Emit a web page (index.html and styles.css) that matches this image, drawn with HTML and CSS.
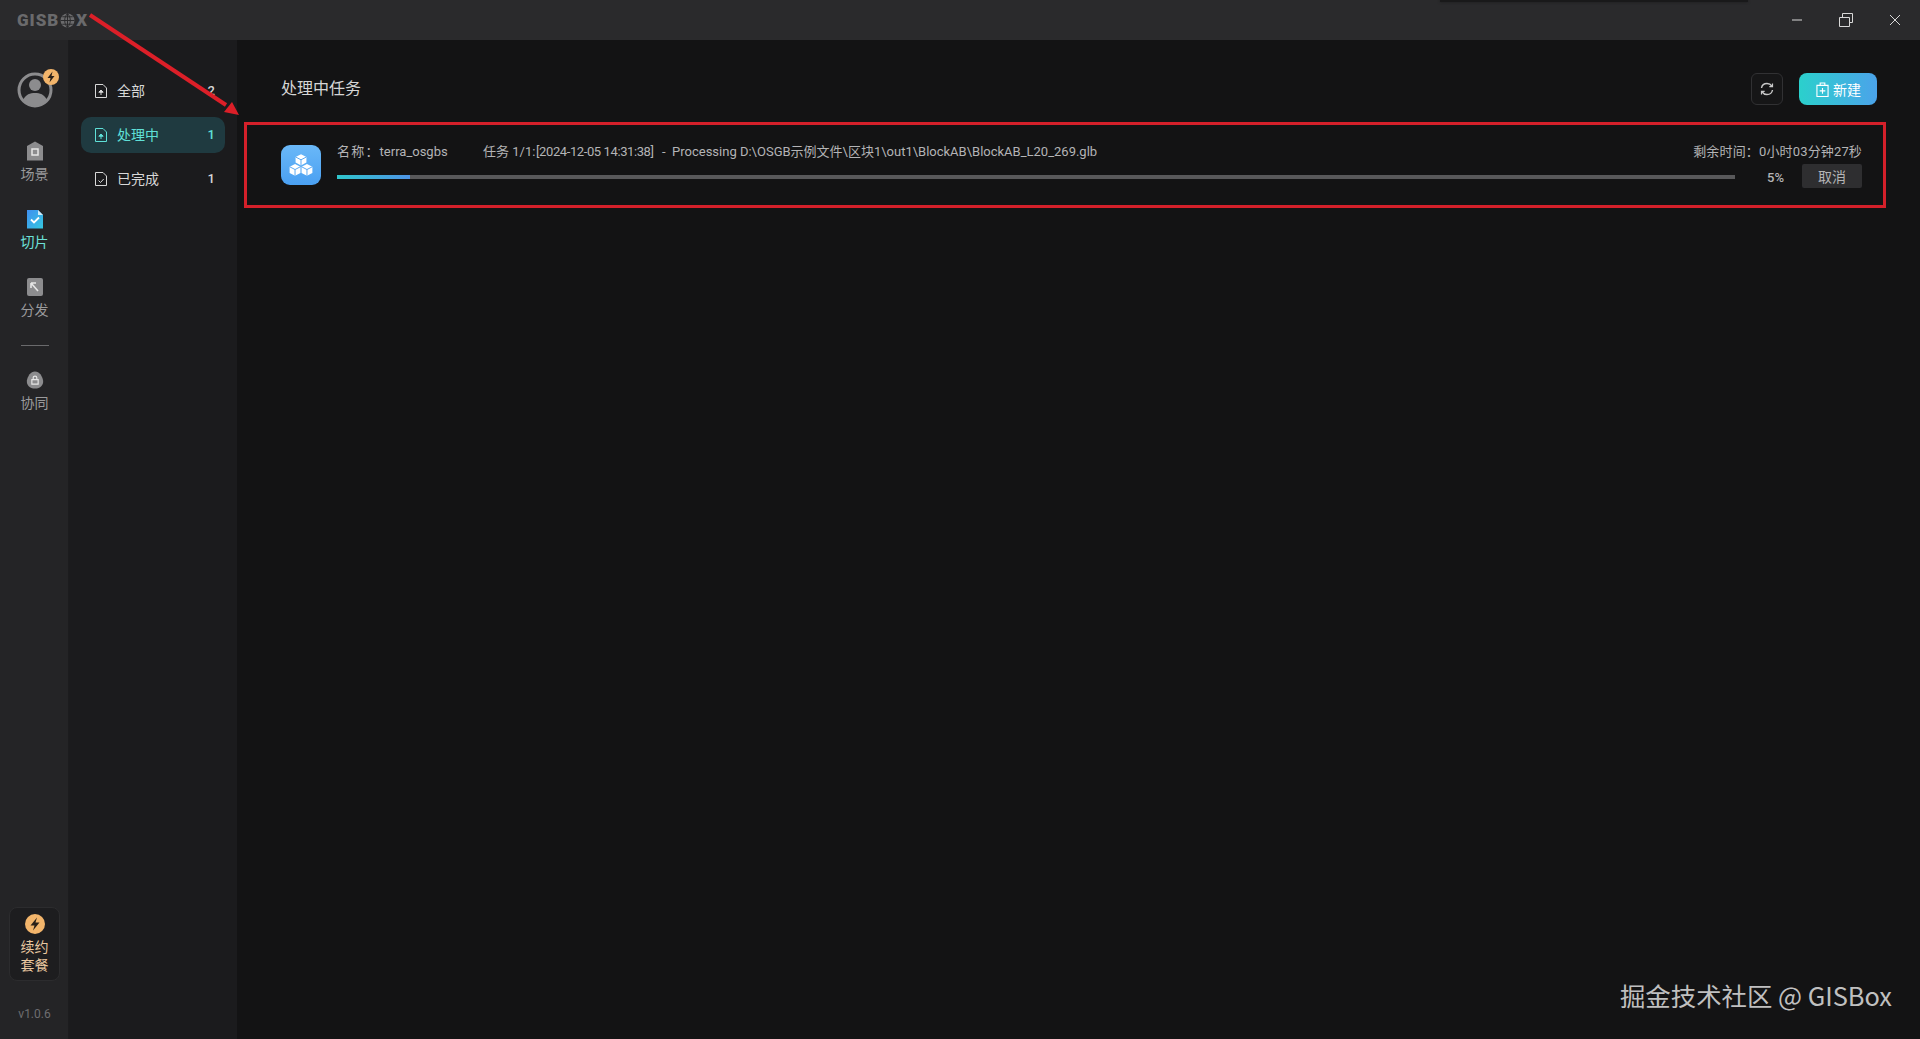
FILE: index.html
```html
<!DOCTYPE html>
<html lang="zh">
<head>
<meta charset="utf-8">
<title>GISBox</title>
<link rel="stylesheet" href="styles.css">
</head>
<body>
<div class="app">
  <header class="titlebar">
    <div class="logo">GISB<svg class="logo-globe" viewBox="0 0 14 14"><circle cx="7" cy="7" r="6.5" fill="#6a6a6c"/><path d="M.5 7h13M7 .5v13M2.200 3.500h9.600M2.200 10.500h9.600M7 .5C3.500 4 3.500 10 7 13.500M7 .5c3.500 3.500 3.500 9.500 0 13" fill="none" stroke="#2a2a2c" stroke-width=".9"/></svg>X</div>
    <div class="winbtns">
      <svg class="win" viewBox="0 0 16 16"><path d="M3 8h10" stroke="#d8d8d8" fill="none"/></svg>
      <svg class="win" viewBox="0 0 16 16"><path d="M1.500 5.500h10v9h-10zM4.500 5.500v-4h10v9h-3" stroke="#d8d8d8" fill="none"/></svg>
      <svg class="win" viewBox="0 0 16 16"><path d="M3 3l10 10M13 3L3 13" stroke="#d8d8d8" fill="none"/></svg>
    </div>
  </header>
  <div class="shade"></div>
  <div class="body">
    <nav class="rail">
      <div class="avatar">
        <svg viewBox="0 0 36 36" class="avatar-img"><circle cx="18" cy="18" r="16" fill="none" stroke="#8c8c8e" stroke-width="3"/><circle cx="18" cy="13" r="6" fill="#8c8c8e"/><path d="M6 28c3-6 7-7 12-7s9 1 12 7c-3 4-7 6-12 6s-9-2-12-6z" fill="#8c8c8e"/></svg>
        <svg viewBox="0 0 16 16" class="avatar-badge"><circle cx="8" cy="8" r="8" fill="#f3b56b"/><path d="M9.500 2.500L4.500 9h3l-1 4.500L11.500 7h-3z" fill="#2a2018"/></svg>
      </div>
      <a class="rail-item">
        <svg viewBox="0 0 18 20" class="rail-icon"><path d="M9 .5L17 5v14.500H1V5z" fill="#8c8c8e"/><rect x="6" y="8" width="6" height="6" fill="none" stroke="#e6e6e6" stroke-width="1.500"/></svg>
        <span>场景</span>
      </a>
      <a class="rail-item rail-active">
        <svg viewBox="0 0 18 20" class="rail-icon"><defs><linearGradient id="slice" x1="0" y1="0" x2="1" y2="1"><stop offset="0" stop-color="#3f8ff0"/><stop offset="1" stop-color="#35c8e0"/></linearGradient></defs><path d="M1 1h11l5 5v13.500H1z" fill="url(#slice)"/><path d="M12 1l5 5h-5z" fill="#cfeaf8"/><path d="M5 10.500l3 3 5-5" fill="none" stroke="#fff" stroke-width="1.800"/></svg>
        <span>切片</span>
      </a>
      <a class="rail-item">
        <svg viewBox="0 0 18 20" class="rail-icon"><rect x="1" y="1" width="16" height="18" rx="2" fill="#8c8c8e"/><path d="M5 6h5M5 6v5M5 6l7 8" fill="none" stroke="#e6e6e6" stroke-width="1.600"/></svg>
        <span>分发</span>
      </a>
      <div class="rail-divider"></div>
      <a class="rail-item">
        <svg viewBox="0 0 20 20" class="rail-icon"><path d="M10 .5c5 0 8 5 9 10 .6 5-3 9-9 9s-9.600-4-9-9c1-5 4-10 9-10z" fill="#8c8c8e"/><path d="M6.500 9.500h7v5h-7zM8 9.500V7.500c0-2.500 4-2.500 4 0v2" fill="none" stroke="#e6e6e6" stroke-width="1.300"/></svg>
        <span>协同</span>
      </a>
      <div class="rail-spacer"></div>
      <a class="renew">
        <svg viewBox="0 0 20 20" class="renew-icon"><circle cx="10" cy="10" r="10" fill="#f3b56b"/><path d="M12 3.500L5.500 11.500h4l-1.500 5L14.500 8.500h-4z" fill="#2a2018"/></svg>
        <span>续约</span>
        <span>套餐</span>
      </a>
      <div class="version">v1.0.6</div>
    </nav>
    <aside class="side">
      <a class="side-item">
        <svg viewBox="0 0 12 14" class="side-icon"><path d="M.5.500h7.500l3.500 3.500v9.500H.5z" fill="none" stroke="currentColor"/><path d="M6 11V6.500M3.800 8.200L6 6l2.200 2.200z" fill="currentColor" stroke="currentColor"/></svg>
        <span class="side-label">全部</span><span class="side-count">2</span>
      </a>
      <a class="side-item side-active">
        <svg viewBox="0 0 12 14" class="side-icon"><path d="M.5.500h7.500l3.500 3.500v9.500H.5z" fill="none" stroke="currentColor"/><path d="M6 11V6.500M3.800 8.200L6 6l2.200 2.200z" fill="currentColor" stroke="currentColor"/></svg>
        <span class="side-label">处理中</span><span class="side-count">1</span>
      </a>
      <a class="side-item">
        <svg viewBox="0 0 12 14" class="side-icon"><path d="M.5.500h7.500l3.500 3.500v9.500H.5z" fill="none" stroke="currentColor"/><path d="M3.500 8.500l2 2 3.200-3.500" fill="none" stroke="currentColor"/></svg>
        <span class="side-label">已完成</span><span class="side-count">1</span>
      </a>
    </aside>
    <main class="main">
      <div class="main-head">
        <h1 class="main-title">处理中任务</h1>
        <div class="actions">
          <button class="btn-refresh"><svg viewBox="0 0 16 16" class="refresh-icon"><path d="M2.500 7C3 4 5.500 2.500 8 2.500c2 0 3.800 1 4.800 2.500M13.500 9c-.5 3-3 4.500-5.500 4.500-2 0-3.800-1-4.800-2.500" fill="none" stroke="#c8c8c8" stroke-width="1.400"/><path d="M13.500 2.500v3.200h-3.200M2.500 13.500v-3.200h3.200" fill="none" stroke="#c8c8c8" stroke-width="1.200"/></svg></button>
          <button class="btn-new"><svg viewBox="0 0 14 16" class="new-icon"><path d="M1 3.500h12v12H1zM4.500 3.500V1h5v2.500M7 6.500v6M4 9.500h6" fill="none" stroke="#fff" stroke-width="1.200"/></svg>新建</button>
        </div>
      </div>
      <section class="task">
        <div class="task-icon">
          <svg viewBox="0 0 24 24" class="cube"><g fill="#fff"><path d="M12 2l5 2.600v5.200L12 12.400 7 9.800V4.600z"/><path d="M6.500 11l5 2.600v5.800l-5 2.600-5-2.600v-5.800z"/><path d="M17.500 11l5 2.600v5.800l-5 2.600-5-2.600v-5.800z"/></g><g fill="none" stroke="#58a8f2" stroke-width=".9"><path d="M7 4.600l5 2.600 5-2.600M12 7.200v5.200M1.500 13.600l5 2.600 5-2.600M6.500 16.200V22M12.500 13.600l5 2.600 5-2.600M17.500 16.200V22"/></g></svg>
        </div>
        <div class="task-body">
          <div class="task-row">
            <span class="task-name"><span class="cjk-wide">名称：</span>terra_osgbs</span>
            <span class="task-info">任务 1/1: <span class="task-stamp">[2024-12-05 14:31:38]</span>  -  Processing D:\OSGB示例文件\区块1\out1\BlockAB\BlockAB_L20_269.glb</span>
            <span class="task-time">剩余时间：0小时03分钟27秒</span>
          </div>
          <div class="task-row">
            <div class="progress"><div class="progress-fill" style="width:5.2%"></div></div>
            <span class="percent">5%</span>
            <button class="btn-cancel">取消</button>
          </div>
        </div>
      </section>
      <div class="watermark">掘金技术社区 @ GISBox</div>
    </main>
  </div>
</div>
<div class="annot-box"></div>
<svg class="annot-arrow" viewBox="0 0 1920 1039"><path d="M90 15L226 105" stroke="#dc1f28" stroke-width="4" fill="none"/><path d="M239 115L224 112L232 102z" fill="#dc1f28"/></svg>
</body>
</html>
```
FILE: styles.css
```css
* { box-sizing: border-box; }
html, body { margin: 0; height: 100%; }
body {
  background: #131314;
  color: #c8c8c8;
  font-family: Roboto, "Noto Sans CJK SC", sans-serif;
  overflow: hidden;
}
.app { display: flex; flex-direction: column; height: 1039px; }
.titlebar {
  height: 40px;
  flex: none;
  display: flex;
  align-items: center;
  justify-content: space-between;
  background: #2a2a2c;
  padding: 0 17px;
}
.logo {
  display: flex;
  align-items: center;
  font: 900 17px Roboto, sans-serif;
  letter-spacing: 1px;
  color: #6a6a6c;
}
.logo-globe { width: 15px; height: 15px; margin: 0 1px; }
.winbtns { display: flex; gap: 33px; }
.win { width: 16px; height: 16px; display: block; }
.shade {
  position: absolute;
  top: 0;
  left: 1440px;
  width: 308px;
  height: 2px;
  background: #19191a;
  box-shadow: 0 0 3px #19191a;
}
.body { flex: 1; display: flex; min-height: 0; }
.rail {
  width: 69px;
  flex: none;
  background: #242426;
  border-right: 1px solid #1c1c1e;
  display: flex;
  flex-direction: column;
  align-items: center;
  padding: 32px 0 0 1px;
}
.avatar { position: relative; width: 36px; height: 36px; margin-bottom: 33px; }
.avatar-img { width: 36px; height: 36px; display: block; }
.avatar-badge { position: absolute; top: -3px; right: -6px; width: 16px; height: 16px; }
.rail-item {
  display: flex;
  flex-direction: column;
  align-items: center;
  font-size: 14px;
  line-height: 20px;
  color: #9a9a9c;
  height: 68px;
}
.rail-icon { width: 18px; height: 20px; margin-bottom: 3px; display: block; }
.rail-active { color: #6ce0d8; }
.rail-divider { width: 28px; height: 1px; background: #6a6a6c; margin: 0 0 24px; }
.rail-spacer { flex: 1; }
.renew {
  width: 51px;
  height: 74px;
  border-radius: 8px;
  background: #1d1d1f;
  border: 1px solid #2c2c2e;
  display: flex;
  flex-direction: column;
  align-items: center;
  font-size: 14px;
  line-height: 18px;
  color: #e9c8a0;
  padding-top: 6px;
}
.renew-icon { width: 20px; height: 20px; margin-bottom: 4px; }
.version { font-size: 12px; color: #6e6e70; margin: 25px 0 17px; line-height: 16px; }
.side {
  width: 168px;
  flex: none;
  background: #1b1b1d;
  padding: 33px 12px 0;
  display: flex;
  flex-direction: column;
  gap: 8px;
}
.side-item {
  height: 36px;
  display: flex;
  align-items: center;
  padding: 0 12px 0 14px;
  font-size: 14px;
  color: #d8d8d8;
  border-radius: 10px;
}
.side-active { background: #1f3a40; color: #5fe0d8; }
.side-icon { width: 12px; height: 14px; margin: -1px 10px 0 0; flex: none; }
.side-label { flex: 1; margin-top: -2px; }
.side-count { font-weight: 500; font-size: 13px; margin: -2px -2px 0 0; }
.main { flex: 1; min-width: 0; position: relative; padding: 33px 43px 0 44px; }
.main-head { display: flex; justify-content: space-between; align-items: center; height: 32px; }
.main-title { font-size: 16px; font-weight: 400; color: #d6d6d6; margin: -5px 0 0; }
.actions { display: flex; gap: 16px; }
.btn-refresh {
  width: 32px;
  height: 32px;
  padding: 0;
  background: #161617;
  border: 1px solid #313133;
  border-radius: 6px;
  display: flex;
  align-items: center;
  justify-content: center;
}
.refresh-icon { width: 16px; height: 16px; }
.btn-new {
  width: 78px;
  height: 32px;
  border: 0;
  border-radius: 8px;
  background: linear-gradient(90deg, #2bd0cc, #4ba3ea);
  color: #fff;
  font: 14px "Noto Sans CJK SC", sans-serif;
  display: flex;
  align-items: center;
  justify-content: center;
  gap: 4px;
  padding: 0 0 0 1px;
}
.new-icon { width: 13px; height: 15px; }
.task { display: flex; gap: 16px; margin-top: 40px; height: 40px; width: 1581px; }
.task-icon {
  width: 40px;
  height: 40px;
  flex: none;
  border-radius: 9px;
  background: linear-gradient(180deg, #6ab8f8, #4aa0f2);
  display: flex;
  align-items: center;
  justify-content: center;
}
.cube { width: 26px; height: 26px; }
.task-body { flex: 1; min-width: 0; margin-top: -4px; }
.task-row { display: flex; align-items: center; font-size: 13px; color: #b4b4b6; height: 18px; }
.task-row + .task-row { height: 24px; margin-top: 6px; }
.task-name { width: 146px; flex: none; }
.cjk-wide { letter-spacing: 1.2px; }
.task-info { flex: 1; min-width: 0; white-space: pre; }
.task-stamp { letter-spacing: -.4px; margin: 0 2px 0 -2.500px; }
.task-time { flex: none; letter-spacing: .15px; }
.progress { flex: 1; height: 4px; background: #58585a; }
.progress-fill { height: 100%; background: linear-gradient(90deg, #2fc6cc, #4e94e6); }
.percent { width: 18px; margin: 1px 17px 0 32px; font-size: 13px; font-weight: 500; }
.btn-cancel {
  width: 60px;
  height: 24px;
  padding: 0;
  border: 0;
  border-radius: 2px;
  background: #2e2e30;
  color: #b4b4b6;
  font: 14px "Noto Sans CJK SC", sans-serif;
  margin-top: -2px;
}
.watermark {
  position: absolute;
  right: 28px;
  bottom: 27px;
  font: 25.400px/34px "Noto Sans CJK SC", sans-serif;
  color: #c0c0c0;
}
.annot-box {
  position: absolute;
  left: 244px;
  top: 122px;
  width: 1642px;
  height: 86px;
  border: 3px solid #d4202a;
}
.annot-arrow {
  position: absolute;
  left: 0;
  top: 0;
  width: 1920px;
  height: 1039px;
  pointer-events: none;
}
```
